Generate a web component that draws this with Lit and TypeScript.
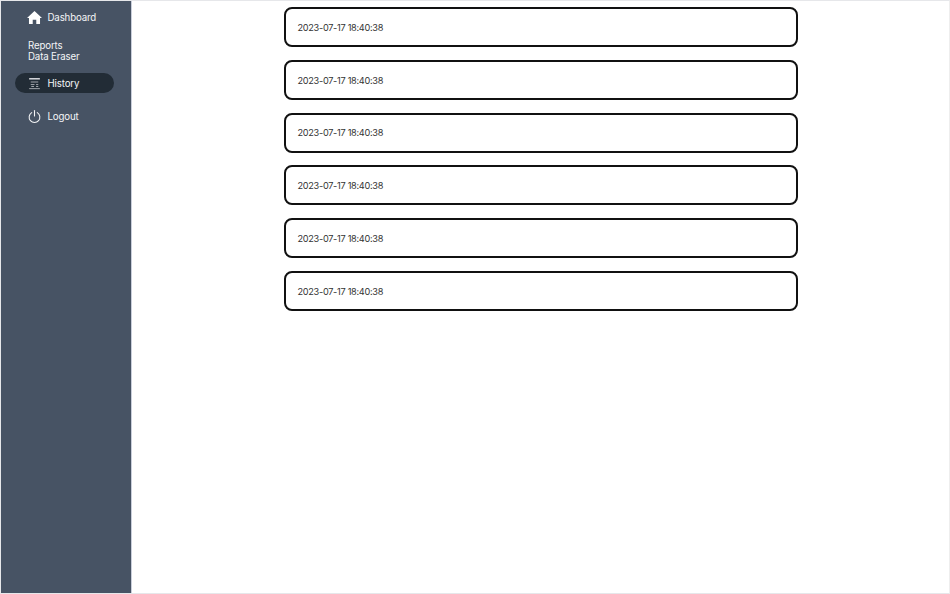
import { LitElement, html, css } from "lit";
import { customElement } from "lit/decorators.js";

@customElement("app-root")
export class AppRoot extends LitElement {
  static styles = css`
    :host { display: block; width: 950px; height: 594px; box-sizing: border-box; background: #fff; border: 1px solid #e6e7ea; border-right-color: #eee; overflow: hidden; font-family: Inter, "Liberation Sans", Arial, sans-serif; }
    .layout { display: flex; height: 100%; }
    .side { width: 130px; flex: none; background: #475364; color: #f4f5f7; border-right: 1px solid #c9ceda; font-size: 9.7px; letter-spacing: -0.15px; padding-top: 6px; box-sizing: content-box; }
    .row { display: flex; align-items: center; height: 20px; margin-left: 14px; padding-left: 12px; }
    .row svg { width: 15px; height: 15px; flex: none; margin-right: 5.5px; }
    .plain { margin: 13px 0 11px 27px; line-height: 11px; height: 22px; }
    .active { width: 99px; box-sizing: border-box; background: #222c36; border-radius: 10px; }
    .logout { margin-top: 13px; }
    .main { flex: 1; display: flex; flex-direction: column; align-items: center; gap: 12.8px; padding-top: 6px; }
    .card { width: 514px; height: 40px; flex: none; box-sizing: border-box; border: 2px solid #111; border-radius: 8px; display: flex; align-items: center; padding: 0.8px 0 0 12px; font-size: 9.2px; letter-spacing: -0.3px; color: #333; }
  `;
  render() {
    return html`<div class="layout">
      <nav class="side">
        <div class="row">
          <svg viewBox="0 0 16 16"><path fill="#fff" d="M8 1 L16 8.6 L13.9 8.6 L13.9 15 L9.9 15 L9.9 10.5 L6.1 10.5 L6.1 15 L2.1 15 L2.1 8.6 L0 8.6 Z"/></svg>
          <span>Dashboard</span>
        </div>
        <div class="plain">Reports<br />Data Eraser</div>
        <div class="row active">
          <svg viewBox="0 0 14 14" fill="none" stroke="#d8dade"><path d="M2 2.6H12" stroke-width="1.4"/><path d="M3.5 5.6H10.5M3.5 8H7M8.5 8H10.5M4 9.8H6.5M8.5 9.8H10.5M2 11.8H12" stroke-width=".65"/></svg>
          <span>History</span>
        </div>
        <div class="row logout">
          <svg viewBox="0 0 14 14" fill="none" stroke="#f4f5f7" stroke-width="1" stroke-linecap="round"><path d="M4.4 3.4A5 5 0 1 0 9.6 3.4"/><path d="M7 1.4V6.6"/></svg>
          <span>Logout</span>
        </div>
      </nav>
      <main class="main">
        ${Array.from({ length: 6 }, () => html`<div class="card">2023-07-17 18:40:38</div>`)}
      </main>
    </div>`;
  }
}
